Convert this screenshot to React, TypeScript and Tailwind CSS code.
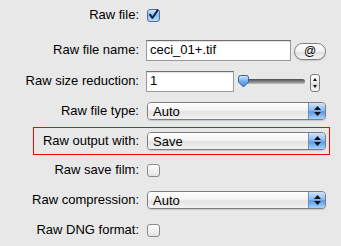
import React from "react";

function Label({ children, width = "w-[139px]" }: { children: React.ReactNode; width?: string }) {
  return <div className={`${width} shrink-0 text-right text-[13px] text-black`}>{children}</div>;
}

function CheckBox({ checked = false }: { checked?: boolean }) {
  return (
    <svg width="13" height="13" viewBox="0 0 13 13" className="block">
      <defs>
        <linearGradient id={checked ? "cbOn" : "cbOff"} x1="0" y1="0" x2="0" y2="1">
          {checked ? (
            <>
              <stop offset="0" stopColor="#d6e8fb" />
              <stop offset="0.5" stopColor="#8fbdf0" />
              <stop offset="1" stopColor="#bcdcfb" />
            </>
          ) : (
            <>
              <stop offset="0" stopColor="#ffffff" />
              <stop offset="0.5" stopColor="#f1f1f1" />
              <stop offset="1" stopColor="#e2e2e2" />
            </>
          )}
        </linearGradient>
      </defs>
      <rect
        x="0.5"
        y="0.5"
        width="12"
        height="12"
        rx="2.5"
        fill={`url(#${checked ? "cbOn" : "cbOff"})`}
        stroke={checked ? "#4d6f9e" : "#8a8a8a"}
      />
      {checked && (
        <path d="M3 5.6 L5.4 9 L10.6 1.4" fill="none" stroke="#14244a" strokeWidth="2" strokeLinecap="round" strokeLinejoin="round" />
      )}
    </svg>
  );
}

function Popup({ value }: { value: string }) {
  return (
    <div className="flex h-[18px] w-[179px] overflow-hidden rounded-[4px] border border-[#7d7d7d] shadow-[0_1px_1px_rgba(0,0,0,0.15)]">
      <div className="flex flex-1 items-center bg-[linear-gradient(#ffffff,#f4f4f4_45%,#e3e3e3_55%,#f2f2f2)] pl-[5px] text-[13px] leading-none text-black">
        {value}
      </div>
      <div className="flex w-[17px] flex-col items-center justify-center gap-[2px] border-l border-[#6a8fbf] bg-[linear-gradient(#cfe4fb,#8ebcf0_45%,#5a9ae8_55%,#a9d2fb)]">
        <svg width="7" height="4" viewBox="0 0 7 4">
          <path d="M3.5 0 L7 4 L0 4 Z" fill="#111" />
        </svg>
        <svg width="7" height="4" viewBox="0 0 7 4">
          <path d="M0 0 L7 0 L3.5 4 Z" fill="#111" />
        </svg>
      </div>
    </div>
  );
}

function TextField({ value, width }: { value: string; width: string }) {
  return (
    <div
      className={`${width} flex h-[21px] items-center border border-[#9a9a9a] border-t-[#6e6e6e] bg-white pl-[3px] text-[13px] text-black shadow-[inset_0_1px_1px_rgba(0,0,0,0.12)]`}
    >
      {value}
    </div>
  );
}

function Slider() {
  return (
    <div className="relative h-[14px] w-[68px]">
      <div className="absolute left-[8px] right-0 top-[4px] h-[5px] rounded-full bg-[linear-gradient(#4d4d4d,#8a8a8a_60%,#c4c4c4)]" />
      <svg width="13" height="13" viewBox="0 0 13 13" className="absolute left-0 top-0">
        <defs>
          <linearGradient id="knob" x1="0" y1="0" x2="0" y2="1">
            <stop offset="0" stopColor="#d5e8fc" />
            <stop offset="0.5" stopColor="#74aef0" />
            <stop offset="1" stopColor="#3f86de" />
          </linearGradient>
        </defs>
        <path d="M1.5 2.5 Q1.5 0.5 3.5 0.5 L9.5 0.5 Q11.5 0.5 11.5 2.5 L11.5 7 L6.5 12 L1.5 7 Z" fill="url(#knob)" stroke="#3e5f8f" />
      </svg>
    </div>
  );
}

function Stepper() {
  return (
    <div className="flex h-[18px] w-[10px] flex-col items-center justify-between rounded-[3px] border border-[#7d7d7d] bg-[linear-gradient(#ffffff,#ececec_50%,#dedede_50%,#f4f4f4)] py-[3px]">
      <svg width="4" height="3" viewBox="0 0 4 3">
        <path d="M2 0 L4 3 L0 3 Z" fill="#111" />
      </svg>
      <svg width="4" height="3" viewBox="0 0 4 3">
        <path d="M0 0 L4 0 L2 3 Z" fill="#111" />
      </svg>
    </div>
  );
}

function AtButton() {
  return (
    <div className="flex h-[17px] w-[32px] items-center justify-center rounded-full border border-[#808080] bg-[linear-gradient(#ffffff,#f1f1f1_50%,#e0e0e0_55%,#f6f6f6)] text-[12px] text-black shadow-[0_1px_1px_rgba(0,0,0,0.15)]">
      @
    </div>
  );
}

export default function App() {
  return (
    <div
      className="h-[246px] w-[341px] overflow-hidden bg-[#e8e8e8]"
      style={{ fontFamily: '"Liberation Sans", Arial, sans-serif' }}
    >
      <div className="flex h-[30px] items-center gap-[8px]">
        <Label>Raw file:</Label>
        <CheckBox checked />
      </div>
      <div className="flex h-[40px] items-center gap-[7px]">
        <Label>Raw file name:</Label>
        <TextField value="ceci_01+.tif" width="w-[145px]" />
        <div className="-ml-[4px] mt-[2px]">
          <AtButton />
        </div>
      </div>
      <div className="flex h-[22px] items-center gap-[7px]">
        <Label>Raw size reduction:</Label>
        <TextField value="1" width="w-[88px]" />
        <div className="-ml-[4px] mt-[2px]">
          <Slider />
        </div>
        <div className="ml-[-2px] mt-[3px]">
          <Stepper />
        </div>
      </div>
      <div className="mt-[8px] flex h-[22px] items-center gap-[8px]">
        <Label>Raw file type:</Label>
        <Popup value="Auto" />
      </div>
      <div className="ml-[33px] mt-[5px] flex h-[28px] w-[297px] items-center gap-[8px] border border-[#ff0000]">
        <Label width="w-[105px]">Raw output with:</Label>
        <Popup value="Save" />
      </div>
      <div className="flex h-[30px] items-center gap-[8px]">
        <Label>Raw save film:</Label>
        <CheckBox />
      </div>
      <div className="flex h-[30px] items-center gap-[8px]">
        <Label>Raw compression:</Label>
        <Popup value="Auto" />
      </div>
      <div className="flex h-[30px] items-center gap-[8px]">
        <Label>Raw DNG format:</Label>
        <CheckBox />
      </div>
    </div>
  );
}
